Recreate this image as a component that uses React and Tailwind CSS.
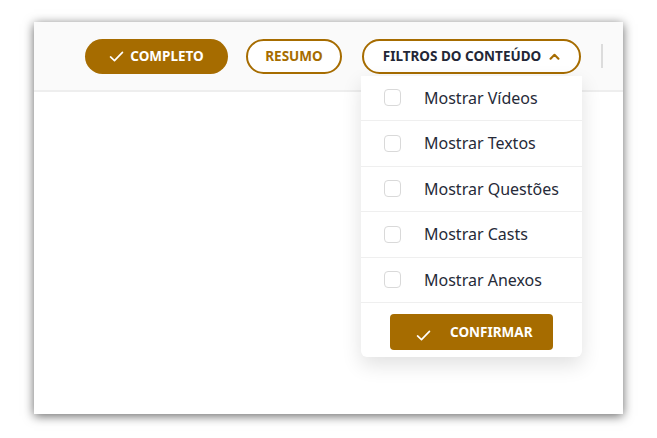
import React from "react";

const Check = ({ className = "" }) => (
  <svg viewBox="0 0 16 12" className={className} fill="none" stroke="currentColor" strokeWidth="1.8" strokeLinecap="round" strokeLinejoin="round">
    <path d="M1.5 6.5 L5.8 10.5 L14.5 1.5" />
  </svg>
);

const items = ["Mostrar Vídeos", "Mostrar Textos", "Mostrar Questões", "Mostrar Casts", "Mostrar Anexos"];

export default function App() {
  return (
    <div className="w-[657px] h-[438px] bg-white pl-[34px] pt-[22px]" style={{ fontFamily: '"Noto Sans", "Liberation Sans", sans-serif' }}>
      <div className="relative w-[589px] h-[392px] bg-white shadow-[0_2px_10px_rgba(0,0,0,0.6)]">
        <div className="h-[70px] bg-[#fafafa] border-b-2 border-[#eeeeee] flex items-center justify-end pr-[20px]">
          <button className="h-[35px] w-[143px] rounded-full bg-[#a66c00] text-white flex items-center justify-center gap-[6px] text-[13.5px] font-bold">
            <Check className="w-[15px] h-[11px]" />
            <span>COMPLETO</span>
          </button>
          <button className="ml-[18px] h-[35px] w-[96px] rounded-full border-2 border-[#a66c00] text-[#a66c00] bg-white flex items-center justify-center text-[13.5px] font-bold">
            RESUMO
          </button>
          <div className="relative ml-[20px]">
            <button className="h-[35px] w-[219px] rounded-full border-2 border-[#a66c00] bg-white text-[#232736] flex items-center justify-center gap-[8px] text-[13.5px] font-bold">
              <span>FILTROS DO CONTEÚDO</span>
              <svg viewBox="0 0 12 8" className="w-[11px] h-[7px] text-[#a66c00]" fill="none" stroke="currentColor" strokeWidth="2.4" strokeLinecap="round" strokeLinejoin="round">
                <path d="M1.5 6.5 L6 2 L10.5 6.5" />
              </svg>
            </button>
            <div className="absolute left-[-1px] top-[37px] w-[221px] bg-white rounded-b-[6px] shadow-[0_8px_20px_rgba(0,0,0,0.12)] z-10">
              {items.map((t) => (
                <div key={t} className="h-[45.5px] border-b border-[#efefef] flex items-center pl-[23px]">
                  <div className="w-[17px] h-[17px] rounded-[4px] border border-[#d9d9d9] bg-white" />
                  <span className="ml-[23px] text-[16px] text-[#262a38]">{t}</span>
                </div>
              ))}
              <div className="pt-[11px] pb-[7px] flex justify-center">
                <button className="h-[36px] w-[163px] rounded-[4px] bg-[#a66c00] text-white flex items-center text-[13.5px] font-bold">
                  <Check className="ml-[26px] w-[15px] h-[11px] mt-[6px]" />
                  <span className="ml-[19px]">CONFIRMAR</span>
                </button>
              </div>
            </div>
          </div>
          <div className="ml-[20px] w-[2px] h-[24px] bg-[#dcdcdc]" />
        </div>
      </div>
    </div>
  );
}
